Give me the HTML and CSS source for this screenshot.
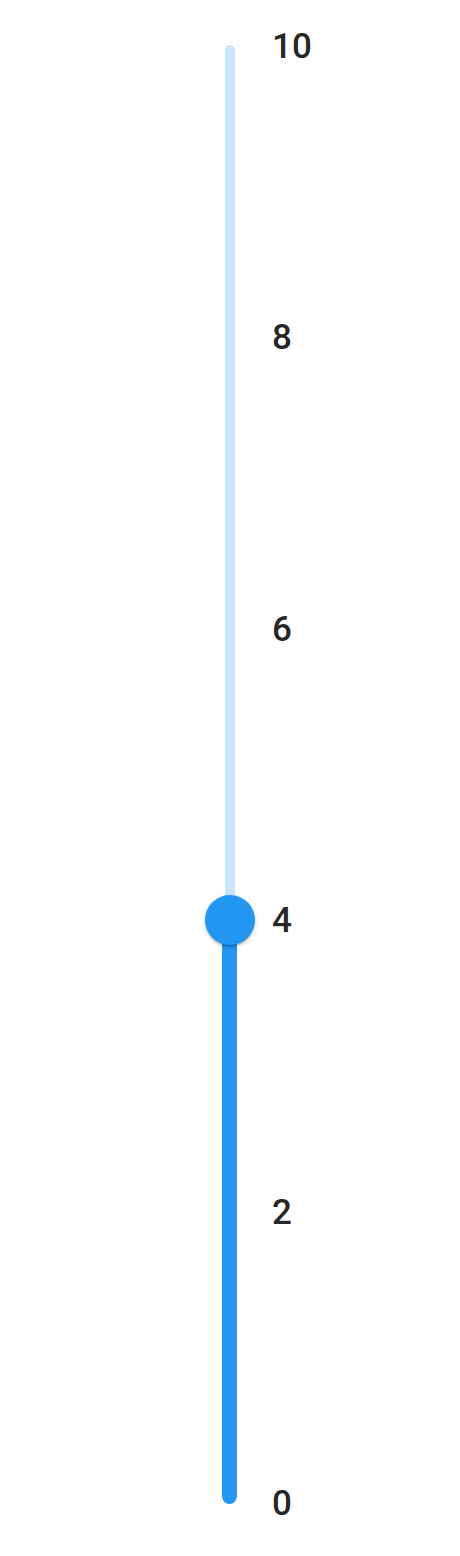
FILE: index.html
```html
<!DOCTYPE html>
<html lang="en">
<head>
<meta charset="utf-8">
<title>Vertical slider</title>
<link rel="stylesheet" href="styles.css">
</head>
<body>
<main class="page">
  <div class="slider" role="slider" aria-valuemin="0" aria-valuemax="10" aria-valuenow="4" aria-orientation="vertical">
    <span class="rail"></span>
    <span class="track" style="top: 60%;"></span>
    <span class="thumb" style="top: 60%;"></span>
    <span class="mark-label" style="top: 0%;">10</span>
    <span class="mark-label" style="top: 20%;">8</span>
    <span class="mark-label" style="top: 40%;">6</span>
    <span class="mark-label" style="top: 60%;">4</span>
    <span class="mark-label" style="top: 80%;">2</span>
    <span class="mark-label" style="top: 100%;">0</span>
  </div>
</main>
</body>
</html>
```

FILE: styles.css
```css
html, body {
  margin: 0;
  padding: 0;
  background: #ffffff;
}

.page {
  width: 460px;
  height: 1556px;
  box-sizing: border-box;
  padding: 46px 0 0 222px;
  font-family: Roboto, "Liberation Sans", Arial, sans-serif;
}

.slider {
  position: relative;
  width: 15px;
  height: 1457px;
}

.rail {
  position: absolute;
  left: 2.5px;
  top: -1px;
  bottom: 0;
  width: 10px;
  border-radius: 5px;
  background: #cbe6fd;
}

.track {
  position: absolute;
  left: 0;
  bottom: -0.5px;
  width: 15px;
  border-radius: 7.5px;
  background: #2196f3;
}

.thumb {
  position: absolute;
  left: 7.5px;
  width: 50px;
  height: 50px;
  margin: -25px 0 0 -25px;
  border-radius: 50%;
  background: #2196f3;
  box-shadow: 0 3px 2px -2px rgba(0, 0, 0, 0.2), 0 2px 3px 0 rgba(0, 0, 0, 0.14), 0 1px 6px 0 rgba(0, 0, 0, 0.12);
}

.mark-label {
  position: absolute;
  left: 50px;
  transform: translateY(-50%);
  font-size: 35px;
  font-weight: 500;
  line-height: 1;
  color: rgba(0, 0, 0, 0.87);
  white-space: nowrap;
}
```
